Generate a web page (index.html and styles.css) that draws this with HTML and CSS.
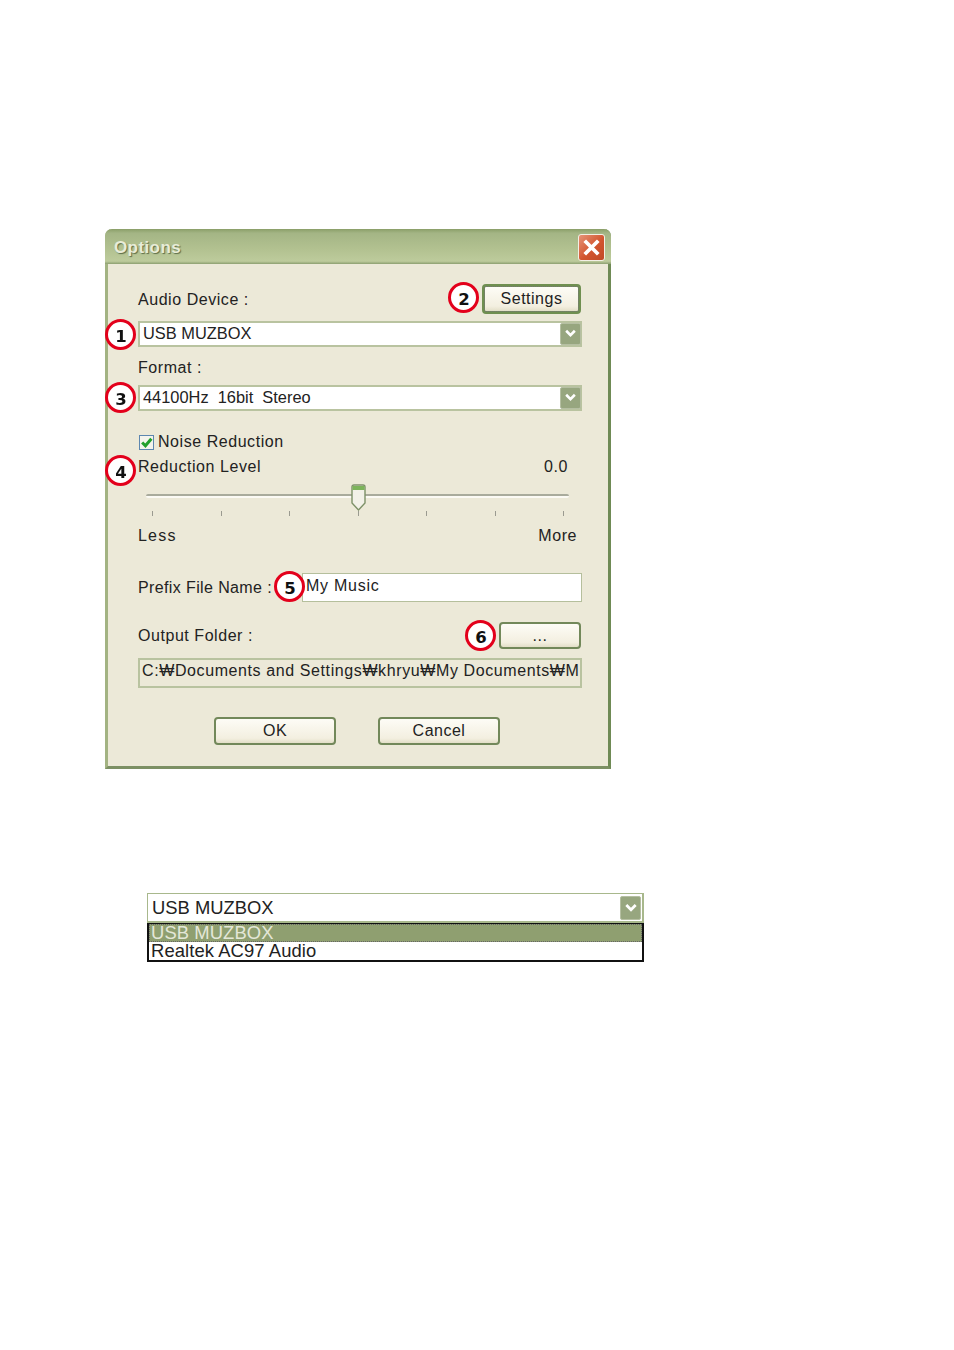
FILE: index.html
```html
<!DOCTYPE html>
<html lang="en">
<head>
<meta charset="utf-8">
<title>Options</title>
<link rel="stylesheet" href="styles.css">
</head>
<body>
<main class="page">
  <section class="dialog">
    <header class="titlebar">
      <span class="title">Options</span>
      <span class="close"><svg viewBox="0 0 24 24" width="25" height="25"><path d="M5.5 5.5 18.5 18.5M18.5 5.5 5.5 18.5" stroke="#fff" stroke-width="3.6" fill="none"/></svg></span>
    </header>
    <div class="content">
      <div class="row row-audio">
        <span class="label">Audio Device :</span>
        <button class="btn btn-default">Settings</button>
      </div>
      <div class="combo combo-audio"><span>USB MUZBOX</span><span class="arrow"><svg viewBox="0 0 12 12" width="13" height="13"><path d="M2 3.5 6 7.5 10 3.5" stroke="#fff" stroke-width="2.4" fill="none"/></svg></span></div>
      <div class="row row-format"><span class="label">Format :</span></div>
      <div class="combo combo-format"><span>44100Hz&nbsp; 16bit&nbsp; Stereo</span><span class="arrow"><svg viewBox="0 0 12 12" width="13" height="13"><path d="M2 3.5 6 7.5 10 3.5" stroke="#fff" stroke-width="2.4" fill="none"/></svg></span></div>
      <div class="row row-noise">
        <span class="check"><svg viewBox="0 0 12 12" width="13" height="13"><path d="M2 6 5 9 10.5 2.5" stroke="#22a02c" stroke-width="2.8" fill="none"/></svg></span>
        <span class="label">Noise Reduction</span>
      </div>
      <div class="row row-level"><span class="label">Reduction Level</span><span class="label value">0.0</span></div>
      <div class="slider">
        <div class="track"></div>
        <div class="thumb"><svg viewBox="0 0 15 27" width="15" height="27"><path d="M1 3Q1 1 3 1H12Q14 1 14 3V19L7.5 26 1 19Z" fill="#f2f1e8" stroke="#7d9168" stroke-width="1.4"/><path d="M1.5 2H13.5V6H1.5Z" fill="#7cb45a"/></svg></div>
        <div class="ticks"><i></i><i></i><i></i><i></i><i></i><i></i><i></i></div>
      </div>
      <div class="row row-ends"><span class="label label-wide">Less</span><span class="label">More</span></div>
      <div class="row row-prefix">
        <span class="label label-tight">Prefix File Name :</span>
        <div class="input">My Music</div>
      </div>
      <div class="row row-output">
        <span class="label">Output Folder :</span>
        <button class="btn btn-browse">...</button>
      </div>
      <div class="path">C:₩Documents and Settings₩khryu₩My Documents₩M</div>
      <div class="actions">
        <button class="btn btn-action">OK</button>
        <button class="btn btn-action">Cancel</button>
      </div>
    </div>
    <span class="badge b1">1</span>
    <span class="badge b2">2</span>
    <span class="badge b3">3</span>
    <span class="badge b4">4</span>
    <span class="badge b5">5</span>
    <span class="badge b6">6</span>
  </section>

  <section class="dropdown">
    <div class="dd-field"><span>USB MUZBOX</span><span class="arrow dd-arrow"><svg viewBox="0 0 12 12" width="14" height="14"><path d="M2 3.5 6 7.5 10 3.5" stroke="#fff" stroke-width="2.4" fill="none"/></svg></span></div>
    <ul class="dd-list">
      <li class="selected">USB MUZBOX</li>
      <li>Realtek AC97 Audio</li>
    </ul>
  </section>
</main>
</body>
</html>
```
FILE: styles.css
```css
* { box-sizing: border-box; }
html, body { margin: 0; padding: 0; background: #fff; }
body { font-family: "Liberation Sans", Arial, sans-serif; color: #222; }
.page { width: 954px; height: 1350px; padding: 229px 0 0 105px; overflow: hidden; filter: blur(0.35px); }

.dialog {
  position: relative; width: 506px; height: 540px;
  background: #ece9d8;
  border-left: 3px solid #a3b382; border-right: 3px solid #6f8a55; border-bottom: 3px solid #7c9064;
  border-radius: 7px 7px 0 0;
  font-size: 16px;
}
.titlebar {
  margin: 0 -3px; height: 35px; padding: 1px 6px 0 9px;
  display: flex; align-items: center; justify-content: space-between;
  background: linear-gradient(#8a9e68 0, #a4b585 12%, #b3c291 60%, #bdcb9c 92%, #8c9f70 100%);
  border-radius: 7px 7px 0 0;
}
.title { margin-top: 1px; font-size: 17px; font-weight: 700; color: #e8ecd8; letter-spacing: .4px; text-shadow: 1px 1px 1px #5d6d48; }
.close {
  width: 27px; height: 27px; display: flex; align-items: center; justify-content: center;
  background: linear-gradient(135deg, #e69478, #d2552f 55%, #c14a26);
  border: 1px solid #f2efe4; border-radius: 3px;
}

.content { padding: 20px 0 0 30px; width: 474px; }
.row { display: flex; align-items: center; }
.label { letter-spacing: .55px; white-space: nowrap; }
.label-tight { letter-spacing: .38px; }
.label-wide { letter-spacing: 1.2px; }
.row-audio { height: 37px; justify-content: space-between; align-items: flex-start; padding-right: 1px; }
.row-audio .label { margin-top: 7px; }
.row-format { height: 38px; padding-top: 4px; }
.row-noise { height: 22px; margin-top: 20px; gap: 4px; }
.row-level { height: 28px; justify-content: space-between; padding-right: 14px; }
.row-ends { height: 22px; justify-content: space-between; padding-right: 5px; }
.row-prefix { height: 29px; margin-top: 26px; }
.row-prefix .input { margin-left: auto; }
.row-output { height: 27px; margin-top: 20px; justify-content: space-between; padding-right: 1px; }

.combo {
  width: 444px; height: 26px; padding: 0 0 1px 3px;
  display: flex; align-items: center; justify-content: space-between;
  background: #fff; border: 2px solid #b9c3a0; font-size: 16.4px;
}
.arrow {
  width: 21px; height: 22px; margin-right: -1px; display: flex; align-items: center; justify-content: center;
  background: #97a67f; border: 1px solid #b5bfa2; border-radius: 2px;
}

.check {
  width: 15px; height: 15px; margin-left: 1px; display: flex; align-items: center; justify-content: center;
  background: #f4f4ec; border: 1.5px solid #5d87b0;
}

.slider { position: relative; height: 41px; margin-top: 3px; }
.track {
  position: absolute; left: 8px; top: 10px; width: 423px; height: 4px;
  background: #fbfaf4; border-top: 2px solid #a9ab9c; border-radius: 2px;
}
.thumb { position: absolute; left: 213px; top: 0; width: 15px; height: 27px; }
.thumb svg { display: block; }
.ticks { position: absolute; left: 14px; top: 27px; width: 412px; display: flex; justify-content: space-between; }
.ticks i { width: 1px; height: 5px; background: #9a9a90; }

.input {
  width: 280px; height: 29px; padding: 0 3px 3px; display: flex; align-items: center;
  background: #fff; border: 1px solid #b5bf9c; letter-spacing: .75px;
}
.path {
  width: 444px; height: 30px; margin-top: 9px; padding: 0 0 0 2px; line-height: 22px;
  background: #ece9d8; border: 2px solid #b9c3a0; overflow: hidden; white-space: nowrap; letter-spacing: .6px;
}

.btn {
  font: inherit; color: inherit; padding: 0; letter-spacing: .5px;
  background: linear-gradient(#fdfcf6, #f3efe0 80%, #e3dfc8);
  border: 2px solid #72885a; border-radius: 4px;
}
.btn-default { width: 99px; height: 30px; border-width: 3px; border-color: #6f8f50; outline: 1px dotted #777; outline-offset: -3px; }
.btn-browse { width: 82px; height: 27px; }
.btn-action { width: 122px; height: 28px; }
.actions { display: flex; gap: 42px; margin: 29px 0 0 76px; }

.badge {
  position: absolute; width: 31px; height: 31px; display: flex; align-items: center; justify-content: center;
  background: #fff; border: 3px solid #e3001b; border-radius: 50%;
  font-family: "DejaVu Sans", sans-serif; font-size: 16.5px; font-weight: 700; color: #111; line-height: 1; padding: 6px 0 0 1px;
}
.b1 { left: -3px; top: 90px; }
.b2 { left: 340px; top: 53px; }
.b3 { left: -3px; top: 153px; }
.b4 { left: -3px; top: 226px; }
.b5 { left: 166px; top: 342px; }
.b6 { left: 357px; top: 391px; }

.dropdown { width: 497px; margin: 124px 0 0 42px; font-size: 18.4px; }
.dd-field {
  height: 30px; padding: 0 1px 0 4px; display: flex; align-items: center; justify-content: space-between;
  background: #fff; border: 1px solid #a8b88c; border-width: 1px 2px 2px 1px;
}
.dd-arrow { width: 21px; height: 24px; margin-right: 0; }
.dd-list { list-style: none; margin: 0; padding: 0; border: 2px solid #111; border-top-width: 1px; background: #fff; }
.dd-list li { height: 18px; line-height: 18px; padding-left: 2px; letter-spacing: .1px; }
.dd-list .selected { background: #8f9f70; color: #e4e7d8; outline: 1px dotted #666; outline-offset: -1px; }
```
